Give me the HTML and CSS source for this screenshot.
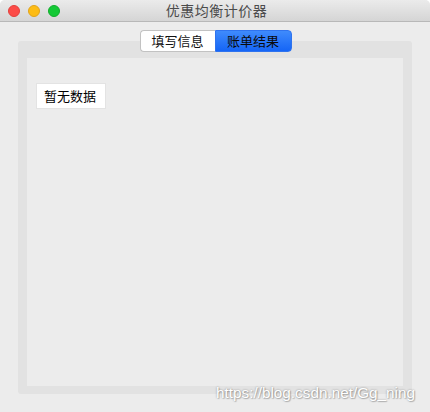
FILE: index.html
```html
<!DOCTYPE html>
<html lang="zh">
<head>
<meta charset="utf-8">
<title>优惠均衡计价器</title>
<link rel="stylesheet" href="styles.css">
</head>
<body>
<div class="window">
  <div class="titlebar">
    <div class="lights">
      <span class="light red"></span>
      <span class="light yellow"></span>
      <span class="light green"></span>
    </div>
    <div class="title">优惠均衡计价器</div>
  </div>
  <div class="main">
    <div class="tabs">
      <div class="tab">填写信息</div>
      <div class="tab active">账单结果</div>
    </div>
    <div class="group">
      <div class="panel">
        <div class="label">暂无数据</div>
      </div>
    </div>
  </div>
  <div class="watermark">https://blog.csdn.net/Gg_ning</div>
</div>
</body>
</html>
```
FILE: styles.css
```css
html, body {
  margin: 0;
  padding: 0;
  background: #ffffff;
}
body {
  width: 430px;
  height: 412px;
  overflow: hidden;
  font-family: "Noto Sans CJK SC", "Noto Sans", sans-serif;
}
.window {
  position: relative;
  width: 430px;
  height: 412px;
  background: #ececec;
  border-radius: 5px 5px 0 0;
  overflow: hidden;
}
.titlebar {
  position: relative;
  height: 21px;
  border-bottom: 1px solid #b8b8b8;
  background: linear-gradient(#ebebeb, #d5d5d5);
  display: flex;
  align-items: center;
  justify-content: center;
}
.lights {
  position: absolute;
  left: 8px;
  top: 5px;
  display: flex;
  gap: 8px;
}
.light {
  width: 12px;
  height: 12px;
  border-radius: 50%;
  box-sizing: border-box;
}
.red { background: #fc4c48; border: 1px solid #e2403c; }
.yellow { background: #fdbc14; border: 1px solid #e0a31a; }
.green { background: #14c936; border: 1px solid #12ac2c; }
.title {
  font-size: 14px;
  color: #4b4b4b;
  line-height: 21px;
  letter-spacing: 0.5px;
  padding-left: 3px;
}
.main {
  padding-top: 8px;
}
.tabs {
  position: relative;
  z-index: 1;
  display: flex;
  justify-content: center;
  height: 22px;
  padding-left: 1px;
}
.tab {
  width: 75px;
  height: 22px;
  box-sizing: border-box;
  font-size: 13px;
  line-height: 20px;
  text-align: center;
  color: #111;
  background: #ffffff;
  border: 1px solid #c2c2c2;
  border-right: none;
  border-radius: 4px 0 0 4px;
}
.tab.active {
  width: 77px;
  background: linear-gradient(#3f8bfc, #1565f6);
  border: 1px solid #2f73ee;
  border-radius: 0 4px 4px 0;
  color: #0a0a0a;
}
.group {
  margin: -11px 18px 0 18px;
  height: 353px;
  box-sizing: border-box;
  padding: 17px 9px 8px 9px;
  background: #e2e2e2;
  border-radius: 3px;
}
.panel {
  height: 100%;
  background: #ececec;
  padding: 24px 9px;
  box-sizing: border-box;
}
.label {
  display: inline-block;
  width: 70px;
  height: 26px;
  box-sizing: border-box;
  background: #ffffff;
  border: 1px solid #e3e3e3;
  font-size: 13px;
  line-height: 24px;
  padding-left: 7px;
  color: #000;
}
.watermark {
  position: absolute;
  left: 216px;
  top: 384px;
  font-family: "Liberation Sans", Arial, sans-serif;
  font-size: 15.3px;
  color: #ffffff;
  text-shadow: 0 0 2px rgba(0,0,0,0.4), 1px 1px 1px rgba(0,0,0,0.2);
  white-space: nowrap;
}
```
